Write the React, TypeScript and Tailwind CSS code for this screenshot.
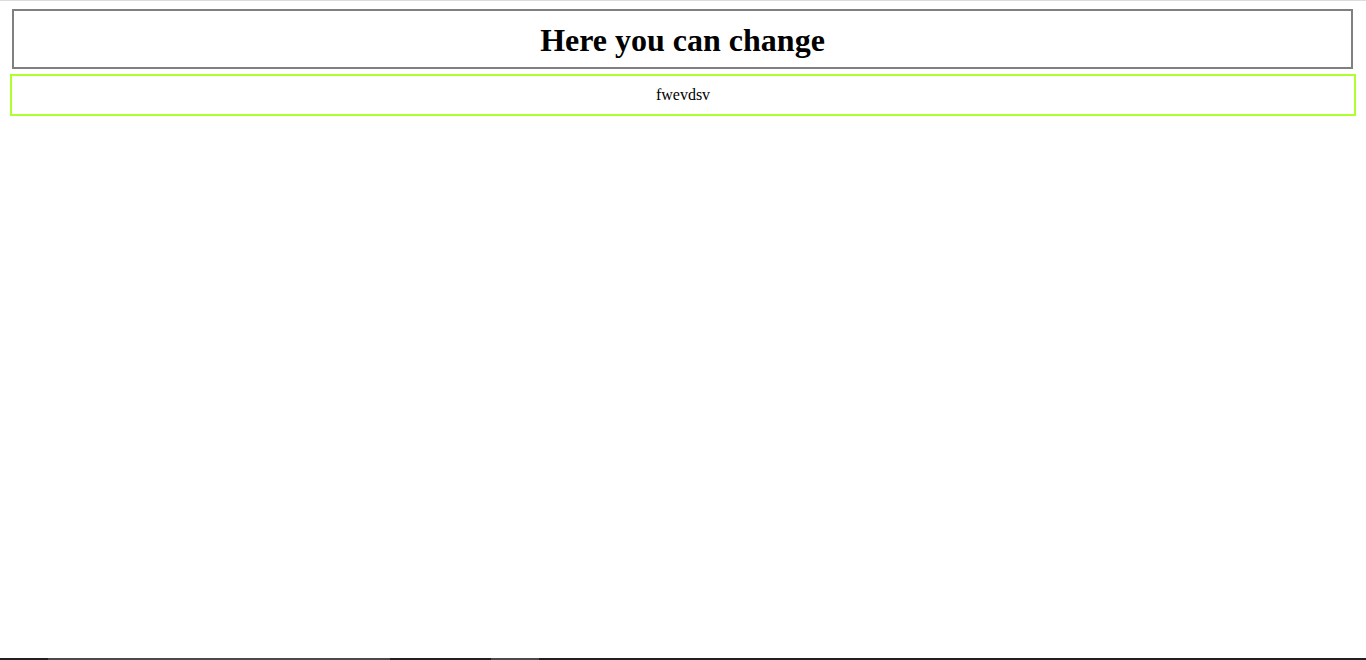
import React from 'react';

function App() {
  return (
    <div className="min-h-[660px] flex flex-col bg-white" style={{ fontFamily: '"Liberation Serif", "Times New Roman", serif' }}>
      <div className="h-px bg-[#dcdcdc]" />
      <div className="flex-1">
        <div className="mt-[8px] ml-[12px] mr-[13px] h-[60px] border-2 border-[#808080] flex items-center justify-center">
          <h1 className="text-[32px] font-bold text-black leading-none pt-[2px]">Here you can change</h1>
        </div>
        <div className="mt-[5px] mx-[10px] h-[42px] border-2 border-[#adff2f] flex items-center justify-center">
          <span className="text-[16px] text-black">fwevdsv</span>
        </div>
      </div>
      <div className="h-[2px] flex bg-[#202020]">
        <div className="w-[48px]" />
        <div className="w-[342px] bg-[#4a4a4a]" />
        <div className="w-[101px]" />
        <div className="w-[48px] bg-[#4a4a4a]" />
      </div>
    </div>
  );
}

export default App;
